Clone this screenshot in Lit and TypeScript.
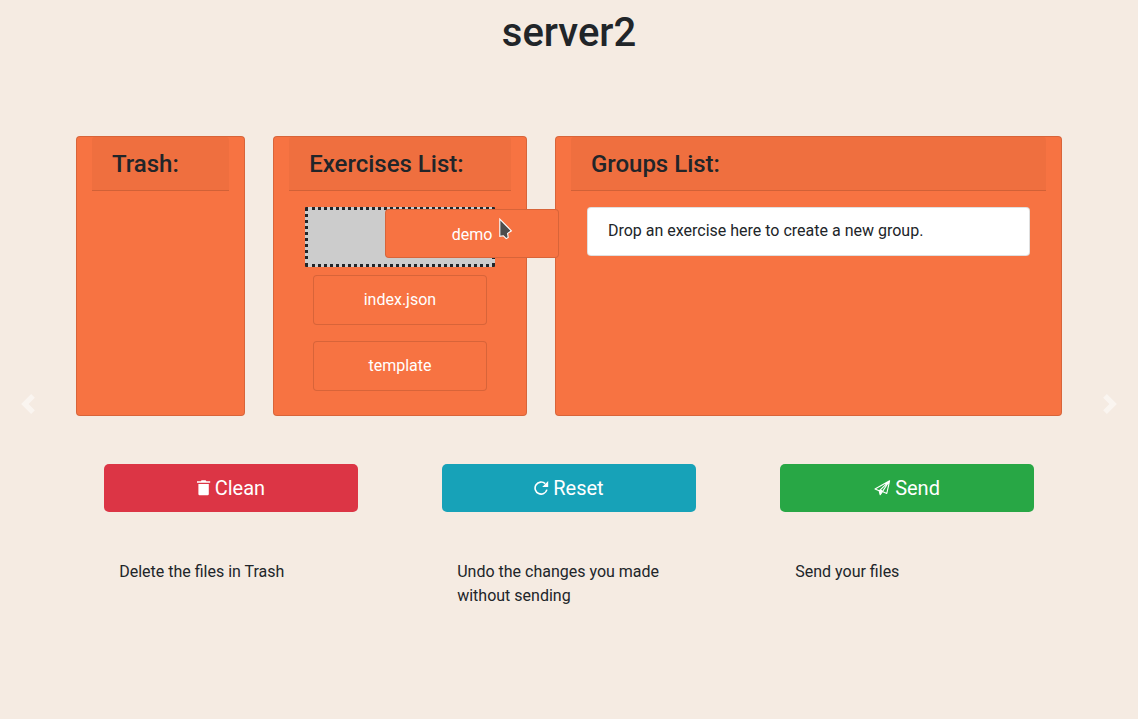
import { LitElement, html, css, svg } from "lit";
import { customElement, state } from "lit/decorators.js";

const trashIcon = svg`<svg width="14" height="16" viewBox="0 0 14 16" fill="currentColor" aria-hidden="true">
  <path d="M0 1.3h3.8L4.6.3h4l.8 1h3.8v1.5H0z"/>
  <path d="M1.4 4h10.4v10a1.2 1.2 0 0 1-1.2 1.2h-8A1.2 1.2 0 0 1 1.4 14z"/>
</svg>`;
const resetIcon = svg`<svg width="15" height="16" viewBox="0 0 15 16" fill="none" aria-hidden="true">
  <path d="M12.9 9.6A6 6 0 1 1 11.2 3.7" stroke="currentColor" stroke-width="1.6"/>
  <path d="M14.2.9v6H8.2z" fill="currentColor"/>
</svg>`;
const sendIcon = svg`<svg width="17" height="16" viewBox="0 0 17 16" fill="none" stroke="currentColor" stroke-width="1.1" stroke-linejoin="round" aria-hidden="true">
  <path d="M15.6.8 1 9.1 5.2 10.8zM15.6.8 8.4 11.6 12.8 13.4z"/>
  <path d="M5.2 10.8 6.2 14.8 8.4 11.6 7.4 10.4z" fill="currentColor"/>
</svg>`;

@customElement("app-root")
export class AppRoot extends LitElement {
  @state() private files = ["index.json", "template"];
  @state() private actions = [
    { kind: "danger", icon: trashIcon, label: "Clean", text: "Delete the files in Trash" },
    { kind: "info", icon: resetIcon, label: "Reset", text: "Undo the changes you made without sending" },
    { kind: "success", icon: sendIcon, label: "Send", text: "Send your files" },
  ];

  static styles = css`
    :host {
      display: block;
      min-height: 100vh;
      background: #f5ebe2;
      color: #212529;
      font: 16px/24px Roboto, sans-serif;
    }
    *, *::before, *::after { box-sizing: border-box; }
    h1, h2, p, ul { margin: 0; padding: 0; }
    .carousel { display: grid; grid-template-columns: 5% minmax(0, 1fr) 5%; }
    .control {
      display: flex;
      justify-content: center;
      align-items: flex-start;
      padding: 394px 0 0;
      border: 0;
      background: none;
      color: #fff;
      opacity: 0.5;
    }
    .slide { padding: 9px 5px 0; }
    h1 { font-size: 40px; line-height: 48px; font-weight: 500; text-align: center; }
    .row { display: flex; justify-content: space-around; }
    .boards { margin-top: 79px; }
    .card {
      border: 1px solid rgba(0, 0, 0, 0.125);
      border-radius: 4px;
      background: #f77342;
      padding: 0 15px;
      min-height: 280px;
    }
    .two { width: 16.6667%; }
    .three { width: 25%; }
    .six { width: 50%; }
    .head {
      padding: 13px 20px 11px;
      border-bottom: 1px solid rgba(0, 0, 0, 0.125);
      border-radius: 3px 3px 0 0;
      background: rgba(0, 0, 0, 0.03);
    }
    h2 { font-size: 24px; line-height: 29px; font-weight: 500; white-space: nowrap; }
    .list { list-style: none; margin: 16px; }
    .file {
      margin: 8px 8px 16px;
      padding: 12px 20px;
      border: 1px solid rgba(0, 0, 0, 0.125);
      border-radius: 4px;
      background: #f77342;
      color: #fff;
      text-align: center;
    }
    .file:last-child { margin-bottom: 8px; }
    .slot {
      position: relative;
      height: 60px;
      border: 3px dotted #212529;
      border-radius: 1px;
      background: #ccc;
    }
    .slot .dragged {
      position: absolute;
      z-index: 1;
      top: -1px;
      left: 77px;
      width: 174px;
      margin: 0;
      padding: 13px 20px 10px;
    }
    .cursor { position: absolute; top: 7px; left: 112px; }
    .hint {
      padding: 11px 20px 12px;
      border: 1px solid rgba(0, 0, 0, 0.125);
      border-radius: 4px;
      background: #fff;
    }
    .actions { margin-top: 48px; }
    .btn {
      display: flex;
      justify-content: center;
      align-items: center;
      gap: 4px;
      width: 100%;
      padding: 9px 16px;
      border: 0;
      border-radius: 5px;
      color: #fff;
      font: 20px/30px Roboto, sans-serif;
    }
    .danger { background: #dc3545; }
    .info { background: #17a2b8; }
    .success { background: #28a745; }
    .note { margin-top: 48px; padding: 0 15px; }
  `;

  render() {
    return html`
      <main class="carousel">
        <button class="control" aria-label="Previous">
          <svg width="20" height="20" viewBox="0 0 8 8" fill="currentColor"><path d="M5.25 0l-4 4 4 4 1.5-1.5-2.5-2.5 2.5-2.5-1.5-1.5z"/></svg>
        </button>
        <div class="slide">
          <h1>server2</h1>
          <div class="row boards">
            <section class="card two"><div class="head"><h2>Trash:</h2></div></section>
            <section class="card three">
              <div class="head"><h2>Exercises List:</h2></div>
              <ul class="list">
                <li class="slot">
                  <div class="file dragged">
                    demo
                    <svg class="cursor" width="16" height="26" viewBox="0 0 16 26" aria-hidden="true">
                      <path d="M1.8 2v17.4l3.6-.6 2.8 2.8 2-1.2-.6-4 3.8-2.6z" fill="#4d4d4d" stroke="#fff" stroke-width="1.1"/>
                    </svg>
                  </div>
                </li>
                ${this.files.map((f) => html`<li class="file">${f}</li>`)}
              </ul>
            </section>
            <section class="card six">
              <div class="head"><h2>Groups List:</h2></div>
              <ul class="list"><li class="hint">Drop an exercise here to create a new group.</li></ul>
            </section>
          </div>
          <div class="row actions">
            ${this.actions.map((a) => html`
              <div class="three">
                <button class="btn ${a.kind}">${a.icon}<span>${a.label}</span></button>
                <p class="note">${a.text}</p>
              </div>`)}
          </div>
        </div>
        <button class="control" aria-label="Next">
          <svg width="20" height="20" viewBox="0 0 8 8" fill="currentColor"><path d="M2.75 0l-1.5 1.5 2.5 2.5-2.5 2.5 1.5 1.5 4-4-4-4z"/></svg>
        </button>
      </main>
    `;
  }
}
